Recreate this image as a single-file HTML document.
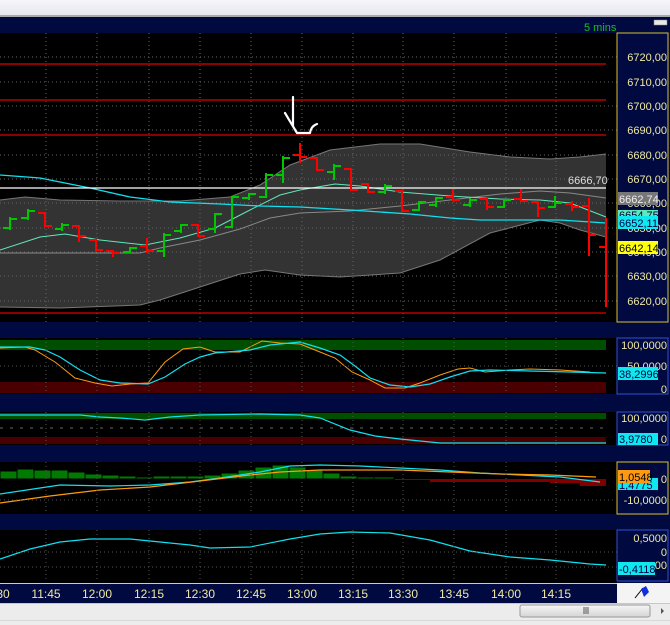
<!DOCTYPE html>
<html><head><meta charset="utf-8"><style>
html,body{margin:0;padding:0;width:670px;height:625px;overflow:hidden;background:#fff}
svg{display:block}
text{font-family:"Liberation Sans",sans-serif}
</style></head><body>
<svg width="670" height="625" viewBox="0 0 670 625" xmlns="http://www.w3.org/2000/svg">
<defs>
<linearGradient id="tg" x1="0" y1="0" x2="0" y2="1"><stop offset="0" stop-color="#f6f6fb"/><stop offset="1" stop-color="#e6e6ee"/></linearGradient>
<linearGradient id="sb" x1="0" y1="0" x2="0" y2="1"><stop offset="0" stop-color="#f6f6f6"/><stop offset="1" stop-color="#d4d4d4"/></linearGradient>
</defs>
<rect x="0" y="0" width="670" height="16" fill="url(#tg)"/>
<rect x="0" y="15" width="670" height="2" fill="#a8a8b0"/>
<rect x="0" y="17" width="670" height="566" fill="#000a40"/>
<text x="584" y="31" font-size="11" fill="#10c020">5 mins</text>
<rect x="654" y="20" width="13" height="5" fill="#e8e8e8" stroke="#888" stroke-width="0.5"/>
<!-- main panel -->
<rect x="0" y="33" width="617" height="289" fill="#000"/>
<polygon fill="#333" points="0,200 25,197 60,200 120,201 180,201 230,197 260,185 290,165 330,150 380,144 420,144 470,152 510,157 550,159 580,157 606,154 606,237 580,230 560,223 540,220 490,233 440,260 400,273 340,277 300,275 265,270 240,274 200,287 160,300 140,305 60,308 0,307"/>
<polyline fill="none" stroke="#777" stroke-width="1" points="0,200 25,197 60,200 120,201 180,201 230,197 260,185 290,165 330,150 380,144 420,144 470,152 510,157 550,159 580,157 606,154"/>
<polyline fill="none" stroke="#777" stroke-width="1" points="606,237 580,230 560,223 540,220 490,233 440,260 400,273 340,277 300,275 265,270 240,274 200,287 160,300 140,305 60,308 0,307"/>
<g stroke="#666" stroke-width="1" stroke-dasharray="1,3">
<line x1="46" y1="33" x2="46" y2="322"/><line x1="97" y1="33" x2="97" y2="322"/><line x1="149" y1="33" x2="149" y2="322"/><line x1="200" y1="33" x2="200" y2="322"/><line x1="251" y1="33" x2="251" y2="322"/><line x1="302" y1="33" x2="302" y2="322"/><line x1="353" y1="33" x2="353" y2="322"/><line x1="403" y1="33" x2="403" y2="322"/><line x1="454" y1="33" x2="454" y2="322"/><line x1="506" y1="33" x2="506" y2="322"/><line x1="556" y1="33" x2="556" y2="322"/>
<line x1="0" y1="57" x2="617" y2="57"/><line x1="0" y1="82" x2="617" y2="82"/><line x1="0" y1="106" x2="617" y2="106"/><line x1="0" y1="130" x2="617" y2="130"/><line x1="0" y1="155" x2="617" y2="155"/><line x1="0" y1="179" x2="617" y2="179"/><line x1="0" y1="203" x2="617" y2="203"/><line x1="0" y1="228" x2="617" y2="228"/><line x1="0" y1="252" x2="617" y2="252"/><line x1="0" y1="276" x2="617" y2="276"/><line x1="0" y1="301" x2="617" y2="301"/>
</g>
<polyline fill="none" stroke="#888" stroke-width="1" points="0,253 60,253 140,253 160,248 200,240 240,229 270,218 300,213 350,211 400,206 450,200 500,194 540,191 570,193 606,198"/>
<polyline fill="none" stroke="#5fe8b8" stroke-width="1" points="0,250 40,237 65,234 100,240 145,245 180,238 215,228 250,210 280,195 300,190 335,184 360,186 400,192 450,196 500,199 540,200 570,203 606,217"/>
<polyline fill="none" stroke="#10e0f0" stroke-width="1.3" points="0,175 40,178 90,188 130,197 170,202 220,204 260,206 300,207 350,210 410,214 450,218 480,220 520,220 560,220 606,223"/>
<g stroke="#e00000" stroke-width="1.3">
<line x1="0" y1="64" x2="606" y2="64"/><line x1="0" y1="100" x2="606" y2="100"/><line x1="0" y1="135" x2="606" y2="135"/><line x1="0" y1="313" x2="606" y2="313"/>
</g>
<line x1="0" y1="188" x2="606" y2="188" stroke="#fff" stroke-width="1.2"/>
<text x="568" y="184" font-size="11" fill="#ddd">6666,70</text>
<path d="M293,97 L293,126 M285,113 L297,133 L310,133 Q311,126 317,124" fill="none" stroke="#fff" stroke-width="2.2" stroke-linecap="round" stroke-linejoin="round"/>
<g stroke="#00c800" stroke-width="2" fill="none">
<path d="M10,217V230M3,228H10M10,219H17"/>
<path d="M28,209V220M21,218H28M28,211H35"/>
<path d="M62,223V231M55,229H62M62,225H69"/>
<path d="M130,247V253M123,252H130M130,248H137"/>
<path d="M164,233V257M157,251H164M164,235H171"/>
<path d="M181,224V233M174,231H181M181,225H188"/>
<path d="M215,213V233M208,229H215M215,214H222"/>
<path d="M232,196V228M225,227H232M232,197H239"/>
<path d="M249,193V200M242,198H249M249,194H256"/>
<path d="M266,173V198M259,197H266M266,175H273"/>
<path d="M283,156V183M276,175H283M283,158H290"/>
<path d="M334,164V180M327,172H334M334,166H341"/>
<path d="M385,184V194M378,192H385M385,186H392"/>
<path d="M419,201V211M412,210H419M419,202H426"/>
<path d="M436,197V207M429,205H436M436,198H443"/>
<path d="M470,198V207M463,205H470M470,200H477"/>
<path d="M504,199V208M497,207H504M504,200H511"/>
<path d="M555,196V208M548,207H555M555,203H562"/>
</g>
<g stroke="#ff0000" stroke-width="2" fill="none">
<path d="M45,212V227M38,213H45M45,226H52"/>
<path d="M79,225V242M72,226H79M79,236H86"/>
<path d="M96,239V252M89,240H96M96,250H103"/>
<path d="M113,250V257M106,251H113M113,253H120"/>
<path d="M147,238V253M140,246H147M147,251H154"/>
<path d="M198,224V237M191,225H198M198,236H205"/>
<path d="M300,143V163M293,155H300M300,157H307"/>
<path d="M317,157V171M310,158H317M317,170H324"/>
<path d="M351,168V191M344,169H351M351,190H358"/>
<path d="M368,183V193M361,184H368M368,192H375"/>
<path d="M402,190V212M395,191H402M402,211H409"/>
<path d="M453,189V201M446,197H453M453,200H460"/>
<path d="M487,198V210M480,199H487M487,207H494"/>
<path d="M521,189V202M514,199H521M521,201H528"/>
<path d="M538,201V217M531,202H538M538,208H545"/>
<path d="M572,201V211M565,204H572M572,207H579"/>
<path d="M589,198V256M582,206H589M589,235H596"/>
<path d="M606,218V307M599,247H606"/>
</g>
<!-- main axis -->
<rect x="617" y="33" width="51" height="289" fill="#000a40" stroke="#d8c030" stroke-width="1"/>
<g font-size="11" fill="#f0e8a0" text-anchor="end">
<text x="667" y="61">6720,00</text><text x="667" y="86">6710,00</text><text x="667" y="110">6700,00</text><text x="667" y="134">6690,00</text><text x="667" y="159">6680,00</text><text x="667" y="183">6670,00</text><text x="667" y="207">6660,00</text><text x="667" y="232">6650,00</text><text x="667" y="256">6640,00</text><text x="667" y="280">6630,00</text><text x="667" y="305">6620,00</text>
</g>
<rect x="618" y="192" width="40" height="13" fill="#777"/><text x="619" y="203" font-size="11" fill="#eee">6662,74</text>
<rect x="618" y="210" width="40" height="8" fill="#5fe8b8"/><text x="619" y="219" font-size="11" fill="#004">6654,75</text>
<rect x="618" y="216" width="40" height="13" fill="#10e8f0"/><text x="619" y="227" font-size="11" fill="#004">6652,11</text>
<rect x="618" y="241" width="40" height="13" fill="#ffff10"/><text x="619" y="252" font-size="11" fill="#000">6642,14</text>
<!-- panel 2 -->
<rect x="0" y="338" width="617" height="56" fill="#000"/>
<rect x="0" y="340" width="606" height="10" fill="#004e00"/>
<rect x="0" y="382" width="606" height="11" fill="#4a0000"/>
<polyline fill="none" stroke="#ff9a10" stroke-width="1" points="0,348 25,347 35,350 55,362 75,378 95,383 112,386 130,384 148,383 165,362 183,349 200,347 215,352 240,352 262,341 280,343 300,344 320,352 335,358 352,372 370,380 385,388 405,388 420,383 440,375 458,369 470,368 485,372 510,370 530,369 560,370 590,372"/>
<polyline fill="none" stroke="#10e0f0" stroke-width="1.2" points="0,347 30,347 45,350 60,357 80,370 100,380 120,383 148,384 165,377 185,364 200,357 215,353 250,350 270,345 300,342 320,348 340,355 355,366 370,378 390,385 410,387 430,384 450,377 470,371 490,370 530,371 570,372 606,373"/>
<rect x="617" y="338" width="51" height="56" fill="#000a40" stroke="#3050d0" stroke-width="1"/>
<g font-size="11" fill="#f0e8a0" text-anchor="end"><text x="667" y="349">100,0000</text><text x="667" y="370">50,0000</text><text x="667" y="393">0</text></g>
<rect x="618" y="367" width="40" height="13" fill="#10e8f0"/><text x="619" y="378" font-size="11" fill="#004">38,2996</text>
<!-- panel 3 -->
<rect x="0" y="412" width="617" height="33" fill="#000"/>
<rect x="0" y="413" width="606" height="6" fill="#004e00"/>
<rect x="0" y="437" width="606" height="7" fill="#4a0000"/>
<line x1="0" y1="428" x2="606" y2="428" stroke="#666" stroke-dasharray="3,7"/>
<polyline fill="none" stroke="#10e0f0" stroke-width="1.2" points="0,415 80,415 100,417 120,418 145,420 170,417 200,415 260,414 300,415 320,418 350,430 375,436 400,439 440,443 500,443 560,443 606,443"/>
<rect x="617" y="412" width="51" height="33" fill="#000a40" stroke="#3050d0" stroke-width="1"/>
<g font-size="11" fill="#f0e8a0" text-anchor="end"><text x="667" y="422">100,0000</text><text x="667" y="443">0</text></g>
<rect x="618" y="433" width="40" height="12" fill="#10e8f0"/><text x="619" y="443" font-size="11" fill="#004">3,9780</text>
<!-- panel 4 -->
<rect x="0" y="462" width="617" height="52" fill="#000"/>
<g fill="#007a00" stroke="#000" stroke-width="1">
<rect x="0" y="471" width="17" height="8"/><rect x="17" y="469" width="17" height="10"/><rect x="34" y="470" width="17" height="9"/><rect x="51" y="470" width="17" height="9"/><rect x="68" y="472" width="17" height="7"/><rect x="85" y="474" width="17" height="5"/><rect x="102" y="475" width="17" height="4"/><rect x="119" y="476" width="17" height="3"/><rect x="136" y="477" width="17" height="2"/><rect x="153" y="476" width="17" height="3"/><rect x="170" y="476" width="17" height="3"/><rect x="187" y="476" width="17" height="3"/><rect x="204" y="475" width="17" height="4"/><rect x="221" y="473" width="17" height="6"/><rect x="238" y="470" width="17" height="9"/><rect x="255" y="467" width="17" height="12"/><rect x="272" y="465" width="17" height="14"/><rect x="289" y="467" width="17" height="12"/><rect x="306" y="470" width="17" height="9"/><rect x="323" y="473" width="17" height="6"/><rect x="340" y="476" width="17" height="3"/><rect x="357" y="477" width="17" height="2"/><rect x="374" y="477" width="20" height="2"/>
</g>
<g fill="#800000">
<rect x="395" y="479" width="35" height="1"/><rect x="430" y="479" width="120" height="3"/><rect x="550" y="479" width="30" height="4"/><rect x="580" y="479" width="26" height="7"/>
</g>
<polyline fill="none" stroke="#10e0f0" stroke-width="1.2" points="0,494 40,488 60,485 110,486 150,485 190,482 220,478 260,472 290,466 320,465 360,466 400,468 440,470 480,473 520,475 560,477 600,482"/>
<polyline fill="none" stroke="#ff9a10" stroke-width="1.2" points="0,503 50,496 100,490 150,487 200,481 250,475 280,472 320,470 360,470 400,470 450,472 500,474 550,475 596,477"/>
<rect x="617" y="462" width="51" height="52" fill="#000a40" stroke="#d8c030" stroke-width="1"/>
<rect x="618" y="478" width="40" height="12" fill="#10e8f0"/><text x="619" y="489" font-size="11" fill="#004">1,4775</text>
<rect x="618" y="470" width="32" height="13" fill="#ff9a10"/><text x="619" y="481" font-size="11" fill="#000">1,0548</text>
<g font-size="11" fill="#f0e8a0" text-anchor="end"><text x="667" y="483">0</text><text x="667" y="504">-10,0000</text></g>
<!-- panel 5 -->
<rect x="0" y="530" width="617" height="51" fill="#000"/>
<polyline fill="none" stroke="#10e0f0" stroke-width="1.2" points="0,559 30,549 60,542 90,539 130,539 150,541 190,545 210,548 250,547 290,539 320,534 350,532 390,533 430,540 470,551 510,557 550,560 590,564 606,565"/>
<rect x="617" y="530" width="51" height="51" fill="#000a40" stroke="#3050d0" stroke-width="1"/>
<g font-size="11" fill="#f0e8a0" text-anchor="end"><text x="667" y="542">0,5000</text><text x="667" y="556">0</text><text x="667" y="569">00</text></g>
<rect x="618" y="562" width="37" height="13" fill="#10e8f0"/><text x="619" y="573" font-size="11" fill="#004">-0,4118</text>
<!-- grid in lower panels -->
<g stroke="#555" stroke-width="1" stroke-dasharray="1,3">
<path d="M46,338V394M97,338V394M149,338V394M200,338V394M251,338V394M302,338V394M353,338V394M403,338V394M454,338V394M506,338V394M556,338V394"/>
<path d="M46,412V445M97,412V445M149,412V445M200,412V445M251,412V445M302,412V445M353,412V445M403,412V445M454,412V445M506,412V445M556,412V445"/>
<path d="M46,462V514M97,462V514M149,462V514M200,462V514M251,462V514M302,462V514M353,462V514M403,462V514M454,462V514M506,462V514M556,462V514"/>
<path d="M46,530V581M97,530V581M149,530V581M200,530V581M251,530V581M302,530V581M353,530V581M403,530V581M454,530V581M506,530V581M556,530V581"/>
<path d="M0,366H617M0,500H617M0,552H617M0,567H617"/>
</g>
<!-- time axis -->
<rect x="0" y="581" width="617" height="2" fill="#000"/>
<line x1="0" y1="583.5" x2="617" y2="583.5" stroke="#e8d840" stroke-width="1"/>
<rect x="0" y="584" width="617" height="19" fill="#000a40"/>
<g font-size="12" fill="#f0e8a0" text-anchor="middle">
<text x="3" y="598">30</text><text x="46" y="598">11:45</text><text x="97" y="598">12:00</text><text x="149" y="598">12:15</text><text x="200" y="598">12:30</text><text x="251" y="598">12:45</text><text x="302" y="598">13:00</text><text x="353" y="598">13:15</text><text x="403" y="598">13:30</text><text x="454" y="598">13:45</text><text x="506" y="598">14:00</text><text x="556" y="598">14:15</text>
</g>
<rect x="617" y="583" width="53" height="20" fill="#f4f4f4"/>
<path d="M635,598 L643,588" stroke="#000" stroke-width="1"/>
<path d="M641,589 L646,586 L649,592 L644,597 Z" fill="#1030e0"/>
<rect x="0" y="603" width="670" height="22" fill="#ececec"/>
<line x1="0" y1="603.5" x2="670" y2="603.5" stroke="#c8c8c8"/>
<rect x="520" y="605" width="130" height="12" rx="2" fill="url(#sb)" stroke="#999"/>
<path d="M584,607V614M586,607V614M588,607V614" stroke="#555"/>
<path d="M661,608 L664,611 L661,614Z" fill="#555"/>
<line x1="0" y1="620.5" x2="670" y2="620.5" stroke="#d8d8d8"/>
</svg>
</body></html>
